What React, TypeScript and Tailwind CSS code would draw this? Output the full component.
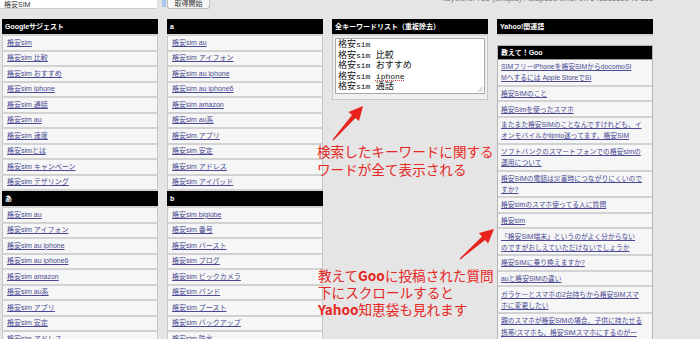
import React from 'react';

const googleSuggest = [
  '格安sim',
  '格安sim 比較',
  '格安sim おすすめ',
  '格安sim iphone',
  '格安sim 通話',
  '格安sim au',
  '格安sim 速度',
  '格安simとは',
  '格安sim キャンペーン',
  '格安sim テザリング',
];

const aRows = [
  '格安sim au',
  '格安sim アイフォン',
  '格安sim au iphone',
  '格安sim au iphone6',
  '格安sim amazon',
  '格安sim au系',
  '格安sim アプリ',
  '格安sim 安定',
  '格安sim アドレス',
  '格安sim アイパッド',
];

const bRows = [
  '格安sim biglobe',
  '格安sim 番号',
  '格安sim バースト',
  '格安sim ブログ',
  '格安sim ビックカメラ',
  '格安sim バンド',
  '格安sim ブースト',
  '格安sim バックアップ',
  '格安sim 防水',
];

const keywordList = ['比較', 'おすすめ', 'iphone', '通話'];

// 教えて！Goo questions, split the way the original wraps them
const gooRows: string[][] = [
  ['SIMフリーiPhoneを格安SIMからdocomoSI', 'Mへするには Apple StoreでSI'],
  ['格安SIMのこと'],
  ['格安Simを使ったスマホ'],
  ['またまた格安SIMのことなんですけれども。イ', 'オンモバイルかiijmio迷ってます。格安SIM'],
  ['ソフトバンクのスマートフォンでの格安simの', '運用について'],
  ['格安SIMの電話は災害時につながりにくいので', 'すか?'],
  ['格安simのスマホ使ってる人に質問'],
  ['格安sim'],
  ['「格安SIM端末」というのがよく分からない', 'のですがおしえていただけないでしょうか'],
  ['格安SIMに乗り換えますか?'],
  ['auと格安SIMの違い'],
  ['ガラケーとスマホの2台持ちから格安SIMスマ', 'ホに変更したい'],
  ['親のスマホが格安SIMの場合、子供に持たせる', '携帯/スマホも、格安SIMスマホにするのが一'],
];

const ColumnHeader = ({ children }: { children: React.ReactNode }) => (
  <div className="h-[17px] bg-black border-b-2 border-[#d2d2d2] px-[3px] text-white font-bold text-[7px] leading-[15px] whitespace-nowrap">
    {children}
  </div>
);

const LinkRow = ({ text }: { text: string }) => (
  <div className="h-[15.5px] bg-[#f6f6f6] border-b-2 border-[#d2d2d2] border-x border-x-[#c6c6c6] px-[4px] flex items-center">
    <a href="#" className="text-[7px] leading-[10px] text-[#4a4a94] underline whitespace-nowrap">
      {text}
    </a>
  </div>
);

const Arrow = ({ x1, y1, x2, y2 }: { x1: number; y1: number; x2: number; y2: number }) => {
  const dx = x2 - x1;
  const dy = y2 - y1;
  const len = Math.hypot(dx, dy);
  const ux = dx / len;
  const uy = dy / len;
  const nx = -uy;
  const ny = ux;
  const head = 14;
  const bx = x2 - ux * head;
  const by = y2 - uy * head;
  const p = (x: number, y: number) => `${x.toFixed(1)},${y.toFixed(1)}`;
  const pts = [
    p(x1 + nx * 0.6, y1 + ny * 0.6),
    p(bx + nx * 2.3, by + ny * 2.3),
    p(bx + nx * 7, by + ny * 7),
    p(x2, y2),
    p(bx - nx * 7, by - ny * 7),
    p(bx - nx * 2.3, by - ny * 2.3),
    p(x1 - nx * 0.6, y1 - ny * 0.6),
  ].join(' ');
  return <polygon points={pts} fill="#e8231d" />;
};

export default function App() {
  return (
    <div className="relative w-[700px] h-[339px] overflow-hidden bg-[#e5e5e5] font-['Liberation_Sans','Noto_Sans_CJK_JP',sans-serif]">
      {/* Top bar */}
      <div className="flex items-start h-[10px]">
        <div className="w-[157px] h-[9px] bg-white border-b border-[#cfcfcf] pl-[4px] text-[7px] leading-[9px] text-[#333]">
          格安SIM
        </div>
        <div className="ml-[5px] w-[4px] h-[7px] bg-[#a9c6ef]" />
        <button className="ml-[1px] w-[43px] h-[9px] bg-[#f8f8f8] border border-t-0 border-[#bdbdbd] rounded-b-[3px] text-[7px] leading-[8px] text-[#333]">
          取得開始
        </button>
        <div className="ml-auto mr-[47px] -mt-[6px] text-[8px] leading-[9px] text-[#777] whitespace-nowrap">
          keyword: 755 (unique) / Elapsed time: 0.754881162949 sec
        </div>
      </div>

      {/* Columns */}
      <div className="mt-[9px] flex gap-[9px] pl-[2px]">
        <div className="w-[156px]">
          <ColumnHeader>Googleサジェスト</ColumnHeader>
          {googleSuggest.map((t) => (
            <LinkRow key={t} text={t} />
          ))}
          <ColumnHeader>あ</ColumnHeader>
          {aRows.slice(0, 9).map((t) => (
            <LinkRow key={t} text={t} />
          ))}
        </div>

        <div className="w-[156px]">
          <ColumnHeader>a</ColumnHeader>
          {aRows.map((t) => (
            <LinkRow key={t} text={t} />
          ))}
          <ColumnHeader>b</ColumnHeader>
          {bRows.map((t) => (
            <LinkRow key={t} text={t} />
          ))}
        </div>

        <div className="w-[156px]">
          <ColumnHeader>全キーワードリスト（重複除去）</ColumnHeader>
          <div className="bg-[#efefef] border border-t-0 border-[#c8c8c8] px-[2px] pt-[2px] pb-[5px]">
            <div className="relative h-[56px] bg-white border border-[#a8a8a8] pl-[2px] pt-[1px] text-[9px] leading-[10.5px] text-[#111] font-['Liberation_Mono','Noto_Sans_CJK_JP',monospace]">
              <div>
                格安<span className="text-[8px]">sim</span>
              </div>
              {keywordList.map((k) => (
                <div key={k} className="whitespace-nowrap">
                  格安<span className="text-[8px]">sim</span>{' '}
                  {k === 'iphone' ? (
                    <span className="text-[8px] underline decoration-dotted decoration-[#e04040]">iphone</span>
                  ) : (
                    k
                  )}
                </div>
              ))}
              <svg className="absolute right-[1px] bottom-[1px]" width="6" height="6" viewBox="0 0 6 6">
                <path d="M5.5 1 L1 5.5 M5.5 3 L3 5.5 M5.5 5 L5 5.5" stroke="#9a9a9a" strokeWidth="0.7" />
              </svg>
            </div>
          </div>
        </div>

        <div className="w-[156px]">
          <ColumnHeader>Yahoo!関連語</ColumnHeader>
          <div className="mt-[9px] border border-[#b4b4b4]">
            <div className="h-[14px] bg-black border-b border-[#9a9a9a] px-[3px] text-white font-bold text-[7px] leading-[13px]">
              教えて！Goo
            </div>
            {gooRows.map((lines, i) => (
              <div key={i} className="bg-[#f6f6f6] border-b-2 border-[#d2d2d2] px-[3px] py-[1.2px] overflow-hidden">
                {lines.map((l) => (
                  <a
                    key={l}
                    href="#"
                    className="block text-[6.8px] leading-[11.2px] text-[#4a4a94] underline whitespace-nowrap"
                  >
                    {l}
                  </a>
                ))}
              </div>
            ))}
          </div>
        </div>
      </div>

      {/* Annotations */}
      <svg className="absolute left-0 top-0 pointer-events-none" width="700" height="339" viewBox="0 0 700 339">
        <Arrow x1={333} y1={140} x2={363} y2={106} />
        <Arrow x1={460} y1={259} x2={494} y2={229} />
      </svg>
      <div className="absolute left-[317px] top-[143px] text-[13.6px] leading-[17.6px] text-[#e6261f] font-['Noto_Sans_CJK_JP',sans-serif] whitespace-nowrap">
        <div>検索したキーワードに関する</div>
        <div>ワードが全て表示される</div>
      </div>
      <div className="absolute left-[318px] top-[267px] text-[13.6px] leading-[17.2px] text-[#e6261f] font-['Noto_Sans_CJK_JP',sans-serif] whitespace-nowrap">
        <div>
          教えて<span className="font-bold">Goo</span>に投稿された質問
        </div>
        <div>下にスクロールすると</div>
        <div>
          <span className="font-bold">Yahoo</span>知恵袋も見れます
        </div>
      </div>
    </div>
  );
}
